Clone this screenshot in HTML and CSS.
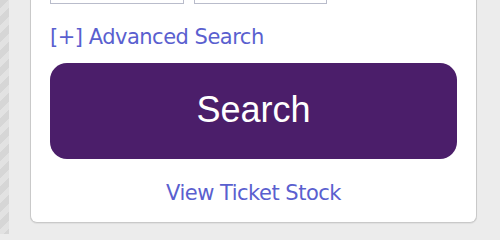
FILE: index.html
```html
<!DOCTYPE html>
<html>
<head>
<meta charset="utf-8">
<link rel="stylesheet" href="styles.css">
</head>
<body>
<div class="page">
  <div class="stripes"></div>
  <div class="gutter"></div>
  <div class="card">
    <div class="inputs">
      <div class="input"></div>
      <div class="input input-right"></div>
    </div>
    <a class="adv" href="#">[+] Advanced Search</a>
    <button class="search">Search</button>
    <a class="stock" href="#">View Ticket Stock</a>
  </div>
  <div class="gutter-right"></div>
</div>
</body>
</html>
```
FILE: styles.css
```css
html, body {
  margin: 0;
  padding: 0;
  background: #ececec;
}
.page {
  display: flex;
  align-items: flex-start;
  width: 500px;
  height: 234px;
  overflow: hidden;
  background: #ececec;
}
.stripes {
  width: 9px;
  height: 234px;
  flex: none;
  background: repeating-linear-gradient(135deg, #d6d6d6 0 6px, #e2e2e2 6px 12px);
}
.gutter {
  width: 21px;
  flex: none;
}
.card {
  width: 407px;
  flex: none;
  margin-top: -30px;
  padding: 0 19px 17px 19px;
  background: #fff;
  border: 1px solid #c9c9c9;
  border-top: none;
  border-radius: 0 0 7px 7px;
  box-shadow: 0 1px 1px rgba(0,0,0,0.06);
  display: flex;
  flex-direction: column;
}
.inputs {
  display: flex;
  gap: 10px;
}
.input {
  width: 132px;
  height: 32px;
  border: 1px solid #b9bccb;
  background: #fff;
}
.input-right {
  width: 131px;
}
.adv, .stock {
  font-family: "DejaVu Sans", Verdana, sans-serif;
  font-size: 21px;
  letter-spacing: -0.5px;
  line-height: 24px;
  color: #5a5fcf;
  text-decoration: none;
}
.adv {
  margin-top: 21px;
  align-self: flex-start;
}
.search {
  margin-top: 14px;
  height: 96px;
  width: 407px;
  border: none;
  border-radius: 17px;
  background: #4b1e6a;
  color: #fff;
  font-family: "Liberation Sans", Arial, sans-serif;
  font-size: 36px;
  display: flex;
  align-items: center;
  justify-content: center;
  padding: 0 0 2px 0;
}
.stock {
  margin-top: 22px;
  align-self: center;
}
```
